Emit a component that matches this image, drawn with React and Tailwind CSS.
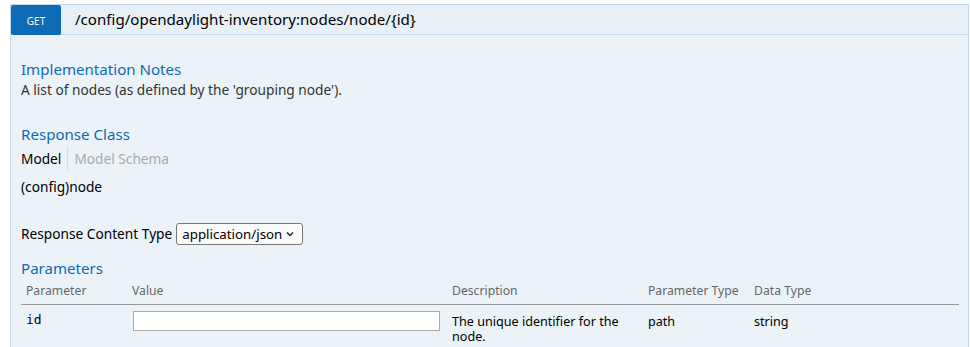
import React from "react";

const sans = { fontFamily: '"Noto Sans", "Open Sans", sans-serif' };

export default function App() {
  return (
    <div className="w-[970px] h-[347px] overflow-hidden bg-white pt-[4px] pl-[10px]" style={sans}>
      <div className="w-[959px]">
        <div className="flex h-[31px] border border-[#c3d9ec] bg-[#e7f0f7]">
          <div className="flex h-[30px] w-[50px] items-center justify-center rounded-[2px] bg-[#0f6ab4] pt-[2px] text-[10px] text-white">
            GET
          </div>
          <div className="pl-[14px] pt-[4px] text-[15.1px] leading-[20px] text-black">
            /config/opendaylight-inventory:nodes/node/{"{id}"}
          </div>
        </div>
        <div className="h-[320px] border-x border-[#c3d9ec] bg-[#ebf3f9] px-[10px] pt-[24px]">
          <h4 className="text-[15.1px] leading-[20px] text-[#0f6ab4]">Implementation Notes</h4>
          <p className="mt-[2px] text-[13.7px] leading-[18px] text-[#333]">
            A list of nodes (as defined by the 'grouping node').
          </p>
          <h4 className="mt-[25px] text-[15.1px] leading-[20px] text-[#0f6ab4]">Response Class</h4>
          <div className="mt-[2px] flex items-center text-[13.7px] leading-[18px]">
            <span className="text-black">Model</span>
            <span className="mx-[6px] h-[25px] w-px bg-[#d6dde3]"></span>
            <span className="text-[#aaa]">Model Schema</span>
          </div>
          <div className="mt-[7px] text-[13.7px] leading-[18px] text-black">(config)node</div>
          <div className="mt-[27px] flex items-center text-[13.7px] leading-[18px] text-black">
            <span>Response Content Type</span>
            <div className="ml-[4px] flex h-[22px] w-[127px] items-center justify-between rounded-[3px] border border-[#767676] bg-[#fbfbfb] pl-[5px] pr-[7px] text-[13.3px]">
              <span>application/json</span>
              <svg width="10" height="10" viewBox="0 0 10 10">
                <path d="M2 3.5 L5 6.5 L8 3.5" fill="none" stroke="#222" strokeWidth="1.4" />
              </svg>
            </div>
          </div>
          <h4 className="mt-[13px] text-[15.1px] leading-[20px] text-[#0f6ab4]">Parameters</h4>
          <div className="mt-[4px] w-[938px]">
            <div className="grid grid-cols-[106px_320px_196px_106px_1fr] border-b border-[#999] text-[12.2px] leading-[18px] text-[#666]">
              <div className="px-[5px] pb-[4px]">Parameter</div>
              <div className="px-[5px] pb-[4px]">Value</div>
              <div className="px-[5px] pb-[4px]">Description</div>
              <div className="px-[5px] pb-[4px]">Parameter Type</div>
              <div className="px-[5px] pb-[4px]">Data Type</div>
            </div>
            <div className="grid grid-cols-[106px_320px_196px_106px_1fr] text-[12.6px] leading-[15px] text-black">
              <div className="px-[5px] pt-[7px] text-[13px]" style={{ fontFamily: '"DejaVu Sans Mono", monospace' }}>id</div>
              <div className="pl-[6px] pt-[6px]">
                <input className="block h-[20px] w-[307px] border border-[#aaa] bg-white" />
              </div>
              <div className="px-[5px] pt-[9px]">The unique identifier for the node.</div>
              <div className="px-[5px] pt-[9px]">path</div>
              <div className="px-[5px] pt-[9px]">string</div>
            </div>
          </div>
        </div>
      </div>
    </div>
  );
}
